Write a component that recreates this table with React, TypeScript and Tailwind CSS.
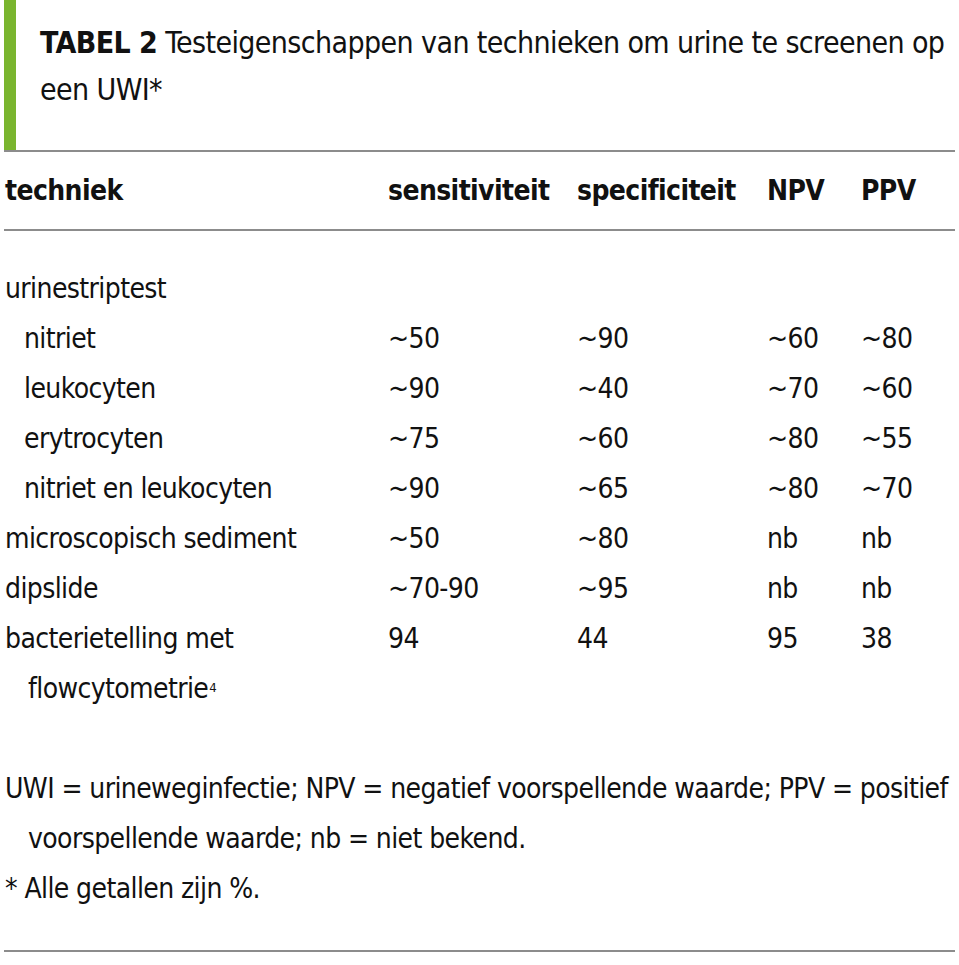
const font = {
  fontFamily:
    '"Liberation Sans Narrow", "DejaVu Sans Condensed", "Roboto Condensed", "Liberation Sans", sans-serif',
};

type Row = { label: string; indent?: boolean; values?: string[]; sup?: string };

const rows: Row[] = [
  { label: "urinestriptest" },
  { label: "nitriet", indent: true, values: ["~50", "~90", "~60", "~80"] },
  { label: "leukocyten", indent: true, values: ["~90", "~40", "~70", "~60"] },
  { label: "erytrocyten", indent: true, values: ["~75", "~60", "~80", "~55"] },
  { label: "nitriet en leukocyten", indent: true, values: ["~90", "~65", "~80", "~70"] },
  { label: "microscopisch sediment", values: ["~50", "~80", "nb", "nb"] },
  { label: "dipslide", values: ["~70-90", "~95", "nb", "nb"] },
  { label: "bacterietelling met", values: ["94", "44", "95", "38"] },
  { label: "flowcytometrie", indent: true, sup: "4" },
];

const cols = "grid grid-cols-[383px_189px_190px_94px_1fr]";

export default function App() {
  return (
    <div
      className="w-[959px] h-[965px] bg-white text-[#111] px-[4px] tracking-[-0.6px]"
      style={font}
    >
      {/* kop met groene balk */}
      <div className="h-[150px] border-l-[12px] border-[#7ab52f] pl-[24px] pt-[19px]">
        <p className="text-[30px] leading-[47px] whitespace-nowrap">
          <span className="font-bold mr-[8px]">TABEL 2</span>
          Testeigenschappen van technieken om urine te screenen op
          <br />
          een UWI*
        </p>
      </div>

      <div className="border-t-2 border-[#8c8c8c]" />

      {/* kolomkoppen */}
      <div className={`${cols} h-[77px] items-center text-[28px] font-bold pl-[1px]`}>
        <span>techniek</span>
        <span>sensitiviteit</span>
        <span>specificiteit</span>
        <span>NPV</span>
        <span>PPV</span>
      </div>

      <div className="border-t-2 border-[#8c8c8c]" />

      {/* tabel */}
      <div className="pt-[33px] text-[28px] leading-[50px] pl-[1px]">
        {rows.map((r, i) => (
          <div key={i} className={cols}>
            <span className={r.indent ? (r.sup ? "pl-[23px]" : "pl-[19px]") : ""}>
              {r.label}
              {r.sup && <sup className="text-[13px] ml-[1px]">{r.sup}</sup>}
            </span>
            {(r.values ?? ["", "", "", ""]).map((v, j) => (
              <span key={j}>{v}</span>
            ))}
          </div>
        ))}
      </div>

      {/* voetnoot */}
      <div className="pt-[50px] pb-[36px] text-[28px] leading-[50px] pl-[1px] whitespace-nowrap">
        <p>UWI = urineweginfectie; NPV = negatief voorspellende waarde; PPV = positief</p>
        <p className="pl-[23px]">voorspellende waarde; nb = niet bekend.</p>
        <p>* Alle getallen zijn %.</p>
      </div>

      <div className="border-t-2 border-[#8c8c8c]" />
    </div>
  );
}
